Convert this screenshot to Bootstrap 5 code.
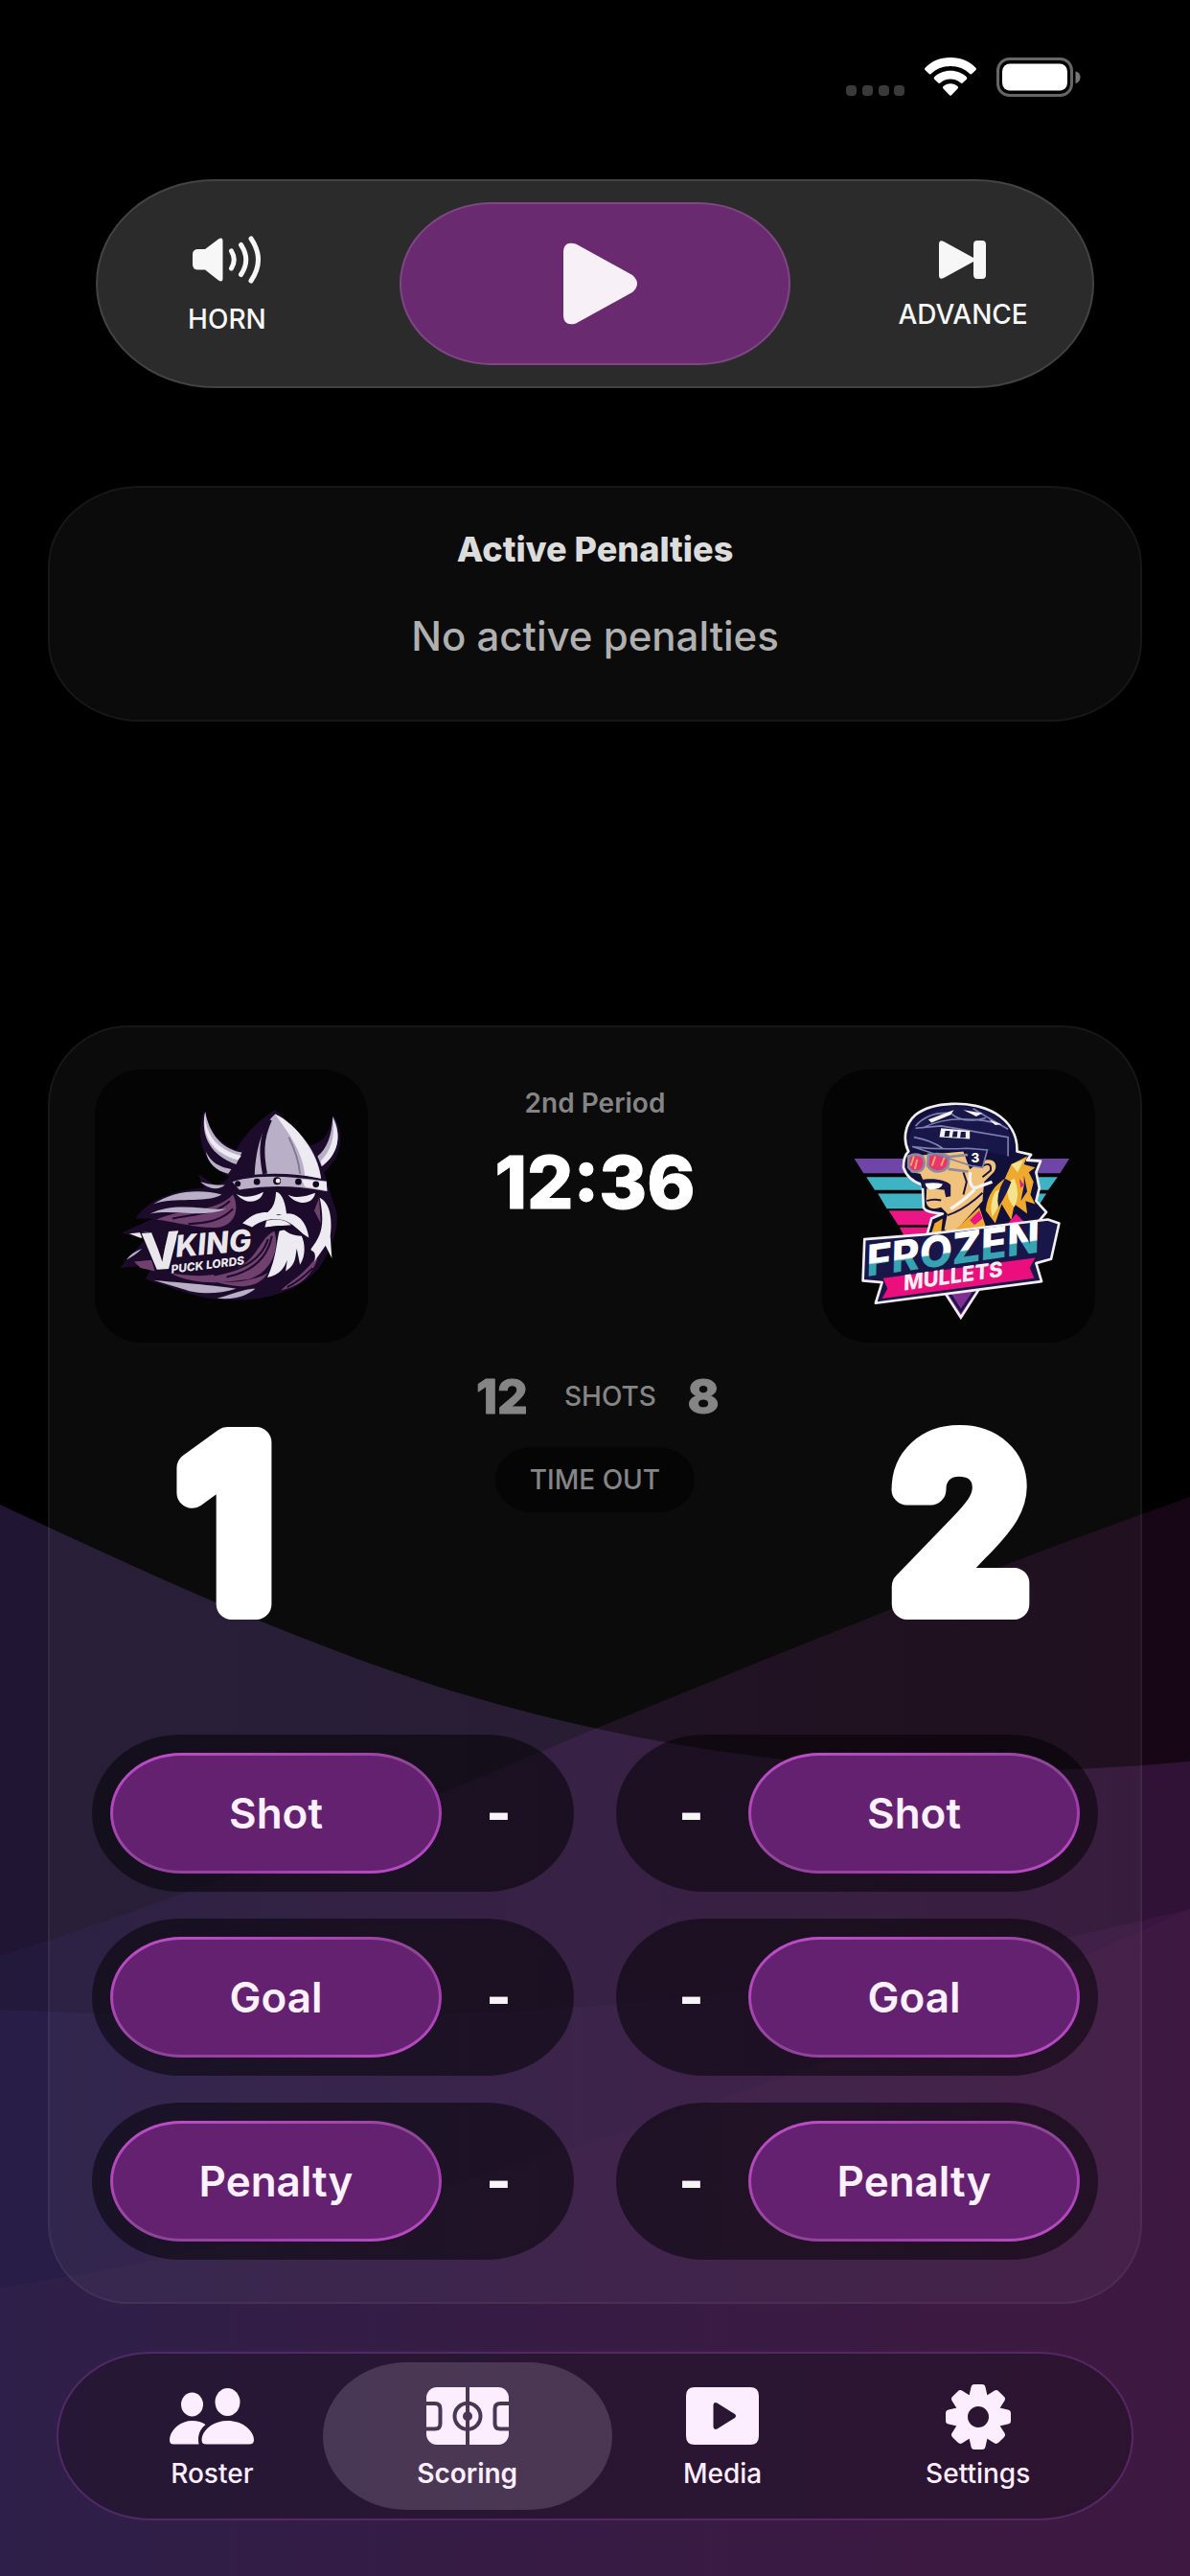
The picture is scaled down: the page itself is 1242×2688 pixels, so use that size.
<!DOCTYPE html>
<html lang="en">
<head>
<meta charset="utf-8">
<meta name="viewport" content="width=device-width, initial-scale=1">
<title>Scoring</title>
<link rel="stylesheet" href="https://cdn.jsdelivr.net/npm/bootstrap@5.3.0/dist/css/bootstrap.min.css">
<style>
  body { background: #000; color: #fff; font-family: Inter, "Liberation Sans", sans-serif; font-size: 28px; line-height: 34px; }
  button { font-family: inherit; }
  svg { display: block; }
  .backdrop { z-index: -1; top: 0; left: 0; }
  .status { padding: 60px 114px 0 0; height: 187px; gap: 20px; }
  .status-icons { height: 41px; gap: 21px; }

  .controls { margin: 0 100px; padding: 24px 0; background: #2b2b2b; border: 2px solid #434343; border-radius: 124px / 109px; height: 218px; }
  .side-btn { width: 26%; gap: 20px; padding-top: 4px; background: none; border: 0; color: #f7f7f7; font-size: 28px; font-weight: 500; }
  .play-btn { width: 408px; height: 170px; padding: 0 0 0 12px; border: 2px solid #7d4784; border-radius: 96px / 85px; background: #6a2a70; }

  .panel { margin: 0 50px; background: rgba(255,255,255,.043); border: 2px solid rgba(255,255,255,.05); }
  .penalties { margin-top: 102px; padding: 44px 0 66px; border-radius: 96px / 84px; height: 246px; }
  .penalties h1 { font-size: 36px; line-height: 40px; font-weight: 800; color: #dcdcdc; margin: 0; }
  .penalties p { font-size: 42px; line-height: 50px; font-weight: 500; color: #b0b0b0; margin: 46px 0 0; }

  .board { margin-top: 317px; padding: 44px; border-radius: 84px; }
  .teams { padding: 0 3px; }
  .team-col { width: 285px; }
  .logo-tile { background: #040404; border-radius: 48px; overflow: hidden; }
  .digits { font-family: Inter, "Liberation Sans", sans-serif; font-weight: 800; fill: #fff; stroke: #fff; stroke-linejoin: round; text-anchor: middle; }
  .score { margin-top: 25px; }
  .score .digits { font-size: 232px; font-weight: 500; stroke-width: 32px; }
  .clock .digits { font-size: 76px; stroke-width: 1px; }
  .shots .digits { font-size: 50px; stroke-width: 1px; fill: #858585; stroke: #858585; }
  .center-col { padding-top: 18px; color: #858585; font-weight: 500; }
  .period { font-weight: 600; }
  .clock { margin-top: 20px; }
  .shots { margin-top: 146px; height: 62px; gap: 30px; }
  .timeout { margin-top: 22px; height: 68px; width: 208px; border: 0; border-radius: 38px / 34px; background: #050505; color: #858585; font-size: 28px; font-weight: 500; }

  .actions { margin-top: 64px; gap: 28px 44px; display: grid; grid-template-columns: 1fr 1fr; }
  .pill { background: rgba(0,0,0,.5); border-radius: 92px / 82px; padding: 19px; height: 164px; }
  .act { width: 346px; flex: none; border: 3px solid transparent; border-radius: 74px / 63px; color: #fdf0ff; font-size: 44px; line-height: 52px; font-weight: 600;
    background: linear-gradient(#642170,#642170) padding-box, linear-gradient(160deg,#c24fce 0%,#a644b0 35%,#8d4794 50%,#a13bac 70%,#c24fce 100%) border-box; }
  .minus { border: 0; background: none; color: #f7f4f7; font-size: 56px; line-height: 56px; font-weight: 800; padding: 0; }

  .tabs { margin: 50px 59px 58px; padding: 9px 27px; height: 176px; background: rgba(28,16,34,.5); border: 2px solid rgba(150,70,180,.4); border-radius: 98px / 88px; }
  .tab { flex: 1 1 0; color: #fdeeff; text-decoration: none; font-weight: 500; padding-top: 23px; gap: 8px; }
  .tab svg { height: 68px; }
  .tab.current { margin: 0 -18px; background: rgba(245,225,255,.165); border-radius: 88px / 77px; flex: 0 0 302px; font-weight: 600; }
</style>
<script src="https://cdn.jsdelivr.net/npm/bootstrap@5.3.0/dist/js/bootstrap.bundle.min.js"></script>
</head>
<body>
<div class="position-relative min-vh-100">

<svg class="backdrop position-absolute w-100 h-100" viewBox="0 0 1242 2688" preserveAspectRatio="none" aria-hidden="true">
  <defs>
    <linearGradient id="wa"><stop offset="0" stop-color="#201532"/><stop offset=".5" stop-color="#20132b"/><stop offset="1" stop-color="#210f28"/></linearGradient>
    <linearGradient id="wb"><stop offset="0" stop-color="#2c2860" stop-opacity=".2"/><stop offset=".5" stop-color="#6e2d82" stop-opacity=".2"/><stop offset="1" stop-color="#6e1e6e" stop-opacity=".2"/></linearGradient>
    <linearGradient id="wc"><stop offset="0" stop-color="#3c3078" stop-opacity=".2"/><stop offset=".5" stop-color="#502864" stop-opacity=".14"/><stop offset="1" stop-color="#6e2878" stop-opacity=".14"/></linearGradient>
    <linearGradient id="wd"><stop offset="0" stop-color="#462850" stop-opacity=".2"/><stop offset=".5" stop-color="#502350" stop-opacity=".12"/><stop offset="1" stop-color="#643246" stop-opacity=".12"/></linearGradient>
  </defs>
  <path fill="url(#wa)" d="M0 1570C150 1640 300 1710 470 1764C650 1818 900 1870 1242 1838V2688H0Z"/>
  <path fill="url(#wb)" d="M0 2041C180 1985 420 1890 626 1802C850 1710 1050 1630 1242 1562V2688H0Z"/>
  <path fill="url(#wc)" d="M0 2097C500 2120 850 2090 1242 1992V2688H0Z"/>
  <path fill="url(#wd)" d="M0 2387C250 2350 450 2285 620 2235C850 2160 1050 2080 1242 1992V2688H0Z"/>
</svg>

<header class="status d-flex justify-content-end">
  <div class="status-icons d-flex align-items-end">
    <svg width="61" height="41" viewBox="0 0 61 41" fill="#3a3a3a" aria-label="No signal"><rect y="29" width="11" height="11" rx="4"/><rect x="17" y="29" width="11" height="11" rx="4"/><rect x="34" y="29" width="11" height="11" rx="4"/><rect x="50" y="29" width="11" height="11" rx="4"/></svg>
    <svg width="54" height="41" viewBox="0 0 54 41" fill="#fff" aria-label="Wi-Fi"><path d="M27 0C16 0 7 4 .8 10.600Q-.6 12 .7 13.300L4.600 17Q5.600 18 6.800 16.900C12 12 19 9 27 9S42 12 47.200 16.900Q48.400 18 49.400 17L53.300 13.300Q54.600 12 53.200 10.600C47 4 38 0 27 0Z"/><path d="M27 13.700C20.500 13.700 14.500 16.200 10.200 20.200Q9 21.500 10.200 22.700L14.300 26.500Q15.300 27.300 16.400 26.400C19.200 23.900 22.900 22.600 27 22.600S34.800 23.900 37.600 26.400Q38.700 27.300 39.700 26.500L43.800 22.700Q45 21.500 43.800 20.200C39.500 16.200 33.500 13.700 27 13.700Z"/><path d="M27 27.200C24 27.200 21.400 28.300 19.500 30Q18.300 31.200 19.500 32.400L26 39.200Q27 40.200 28 39.200L34.500 32.400Q35.700 31.200 34.500 30C32.600 28.300 30 27.200 27 27.200Z"/></svg>
    <svg width="88" height="41" viewBox="0 0 88 41" aria-label="Battery full"><rect x="1.500" y="1.500" width="77" height="38" rx="12" fill="none" stroke="#666" stroke-width="3"/><rect x="6" y="6.500" width="68" height="28" rx="8" fill="#fff"/><path d="M82.500 14.500C85.500 15 87.500 17.500 87.500 20.500S85.500 26.500 82.500 27Z" fill="#777"/></svg>
  </div>
</header>

<main>
  <section class="controls d-flex justify-content-between align-items-center" aria-label="Game clock controls">
    <button type="button" class="side-btn d-flex flex-column align-items-center">
      <svg width="72" height="50" viewBox="0 0 72 50" fill="#f7f7f7" aria-hidden="true"><path d="M6 14H13L27 3.500Q31.500.8 31.500 5.500V44.500Q31.500 49 27 46.500L13 35.500H6Q0 35.500 0 30V19.500Q0 14 6 14Z"/><g fill="none" stroke="#f7f7f7" stroke-width="5" stroke-linecap="round"><path d="M40.500 16Q46 25 40.500 34"/><path d="M50.500 9.500Q61 25 50.500 40.500"/><path d="M61 3Q76 25 61 47"/></g></svg>
      <span>HORN</span>
    </button>
    <button type="button" class="play-btn d-flex align-items-center justify-content-center" aria-label="Play">
      <svg width="78" height="86" viewBox="0 0 78 86" aria-hidden="true"><path fill="#f7f0f7" d="M0 9Q1-2 13 1.500L72 34Q82 43 72 52L13 84.500Q1 88 0 77Z"/></svg>
    </button>
    <button type="button" class="side-btn d-flex flex-column align-items-center">
      <svg width="50" height="40" viewBox="0 0 50 40" fill="#f7f7f7" aria-hidden="true"><path d="M0 4Q0-1.500 5 1L36 18V4Q36 0 40 0H45Q49 0 49 4V36Q49 40 45 40H40Q36 40 36 36V22L5 39Q0 41.500 0 36Z"/></svg>
      <span>ADVANCE</span>
    </button>
  </section>

  <section class="panel penalties text-center">
    <h1>Active Penalties</h1>
    <p>No active penalties</p>
  </section>

  <section class="panel board">
    <div class="teams d-flex justify-content-between">
      <div class="team-col">
        <div class="logo-tile">
          <svg width="285" height="285" viewBox="58 78 854 856" role="img" aria-label="Vking Puck Lords">
            <g fill="#1d0b2c"><path d="M400 205C370 300 395 370 480 415L440 445L380 405L400 450C300 455 220 490 185 545L240 545L140 590L215 610L135 700L240 690L215 735C330 770 380 800 480 800C600 805 700 770 760 700C800 640 830 560 810 510L775 400C830 350 845 280 803 220C790 290 770 310 715 320C690 270 650 220 620 205C560 245 520 290 500 330C450 310 410 270 400 205Z"/></g>
            <g fill="#70406f"><path d="M490 470C430 530 340 510 250 548C330 560 400 580 450 572C500 560 510 510 490 470Z"/><path d="M620 585C580 600 570 660 520 690C460 730 360 730 290 715C380 760 470 745 540 735C600 720 640 650 620 585Z"/><path d="M180 680L235 675L245 710L200 700Z"/><path d="M760 480L745 520L765 560Z"/><path d="M740 680C700 730 670 740 640 770C700 760 740 720 755 670Z"/><path d="M440 745C500 745 560 740 600 715C570 765 510 765 440 745Z"/></g>
            <g fill="none" stroke="#1d0b2c" stroke-width="6"><path d="M480 490C440 530 380 530 300 545M490 515C450 555 400 560 350 562M612 600C600 660 560 710 470 728M600 610C580 670 530 705 430 722M740 700Q700 740 660 760"/></g>
            <g fill="#b9b0c8"><path d="M403 210C415 275 450 325 518 338L500 375C425 350 385 290 403 210Z"/><path d="M405 335C420 370 450 385 485 390L475 405C435 395 410 370 405 335Z"/><path d="M803 225C800 285 785 325 755 350L768 382C815 350 835 285 803 225Z"/><path d="M622 218C585 250 562 320 558 408Q660 398 766 420C760 340 690 250 622 218Z"/><path d="M488 430Q580 398 783 428L785 460Q640 432 510 455Z"/><path d="M388 430C410 450 440 460 465 440C445 440 420 440 388 430Z"/><path d="M455 470C380 450 300 460 240 500C310 475 400 500 455 470Z"/><path d="M470 515C400 520 310 490 230 530C310 515 390 545 470 515Z"/><path d="M240 738C300 745 400 750 500 765C440 785 370 780 340 768Z"/><path d="M560 765C520 765 480 785 440 795C490 800 530 790 560 765Z"/><path d="M155 675Q175 650 205 640Q185 660 155 675Z"/></g>
            <g fill="#edeaf1"><path d="M403 210C400 280 440 330 516 348L506 362C425 340 390 285 403 210Z"/><path d="M803 235C812 290 795 335 765 365L768 380C820 345 832 285 803 235Z"/><path d="M622 218C650 260 710 330 715 410L766 420C755 340 690 250 622 218Z"/><path d="M705 422L783 430L785 458L715 445Z"/><path d="M500 468C530 485 560 475 585 462C580 495 530 505 500 468Z"/><path d="M662 470C690 485 720 475 748 465C740 505 690 505 662 470Z"/><path d="M625 462C645 465 655 500 658 532H590C615 515 622 500 625 462Z"/><path d="M520 560C560 520 600 520 632 535C670 520 715 530 728 605C700 590 690 570 660 555C620 535 570 555 550 572Z"/><path d="M595 552C620 545 650 545 672 565L590 572Z"/><path d="M640 570C625 610 630 660 598 730C640 720 650 700 660 675L655 710C690 690 685 660 690 640L700 690C720 660 715 620 705 600C680 600 655 590 640 570Z"/><path d="M762 480C800 500 800 560 795 600L800 670L780 630L745 680C755 640 730 650 735 640C765 600 780 570 762 480Z"/></g>
            <path d="M605 235C575 300 580 350 590 405" fill="none" stroke="#1d0b2c" stroke-width="15"/>
            <path d="M665 290Q695 350 700 405" fill="none" stroke="#817a95" stroke-width="6"/>
            <g fill="#130720"><circle cx="505" cy="436" r="9"/><circle cx="565" cy="430" r="10"/><circle cx="628" cy="427" r="12"/><circle cx="695" cy="430" r="10"/><circle cx="750" cy="438" r="10"/><path d="M590 575Q630 560 680 575L630 585Z"/></g>
            <circle cx="631" cy="427" r="7" fill="#eee"/>
            <g font-family="Inter, sans-serif" fill="#e9e7ec" font-weight="800" stroke="#180a24" paint-order="stroke"><path d="M165 592L225 586V602L200 606Z" stroke="none"/><text x="208" y="708" font-size="160" stroke-width="8" transform="rotate(-4 208 708)">V</text><text x="312" y="666" font-size="94" font-style="italic" transform="rotate(-5 312 666)" stroke-width="8">KING</text><text x="297" y="717" font-size="36" font-style="italic" transform="rotate(-7 297 717)" stroke-width="5">PUCK LORDS</text></g>
          </svg>
        </div>
        <div class="score"><svg class="mx-auto" width="240" height="320" viewBox="0 0 240 320"><text class="digits" x="116" y="248">1</text></svg></div>
      </div>

      <div class="center-col d-flex flex-column align-items-center">
        <div class="period">2nd Period</div>
        <div class="clock"><svg width="260" height="92" viewBox="0 0 260 92"><text class="digits" x="130" y="73">12:36</text></svg></div>
        <div class="shots d-flex align-items-center justify-content-center">
          <svg width="70" height="62" viewBox="0 0 70 62"><text class="digits" x="35" y="49">12</text></svg>
          <span>SHOTS</span>
          <svg width="38" height="62" viewBox="0 0 38 62"><text class="digits" x="19" y="49">8</text></svg>
        </div>
        <button type="button" class="timeout">TIME OUT</button>
      </div>

      <div class="team-col">
        <div class="logo-tile">
          <svg width="285" height="285" viewBox="58 78 854 856" role="img" aria-label="Frozen Mullets">
            <path fill="#6f46a8" d="M158 357H832L803 403H187Z"/><path fill="#3fb3c4" d="M196 415H795L766 456H222Z"/><path fill="#3fb3c4" d="M232 467H760L730 514H260Z"/><path fill="#ea1686" d="M266 520H725L698 565H295Z"/><path fill="#ea1686" d="M300 573H690L660 620H325Z"/>
            <path fill="#10103a" stroke="#f3eff0" stroke-width="8" stroke-linejoin="round" d="M328 335C310 300 315 250 350 220C400 180 520 170 600 215C650 245 670 290 668 335L712 345L700 362L742 365L728 400L738 450L728 490L760 525L735 555L640 600H385L400 545L435 530C410 528 380 525 375 510L372 440C340 430 320 410 312 385Q312 350 328 335Z"/>
            <path fill="#f1c27c" d="M335 350L500 335L520 390L560 365C600 350 610 380 595 400L565 430L560 490L470 590L440 580L450 530L430 510C400 520 385 510 383 490L385 450L365 405L335 400Z"/>
            <path fill="#1a1346" d="M365 425C400 415 450 425 460 440V475L445 478L440 455L370 450Z"/><path fill="#fff" d="M380 435Q410 430 435 437Q430 455 395 454Q382 450 380 435Z"/><path fill="none" stroke="#1a1346" stroke-width="6" d="M385 490Q405 482 430 488M500 400L510 430L500 470"/>
            <g stroke="#8b8aa3" stroke-width="8"><path fill="#e8356b" d="M328 350Q350 338 372 350Q385 375 370 392Q345 408 328 385Z"/><path fill="#e8356b" d="M390 345Q430 338 452 350Q460 385 435 395Q405 405 388 380Z"/><path fill="none" d="M452 352L515 345M452 390L515 398"/></g>
            <path fill="none" stroke="#ffa46a" stroke-width="6" d="M345 350L335 380M355 360L348 390M412 350L402 380M442 350L430 380"/>
            <path fill="none" stroke="#f5f2f4" stroke-width="10" d="M522 400Q515 440 535 450L590 430M535 455Q500 490 460 515"/>
            <path fill="none" stroke="#1a1346" stroke-width="6" d="M560 380Q590 365 585 395L560 415M450 535Q500 520 560 465"/>
            <path fill="#19164a" d="M328 325C325 250 380 200 480 193C580 195 640 240 650 300L640 350L575 335L560 385L525 380L510 335Z"/>
            <g fill="none" stroke="#7c7fb0" stroke-width="5"><path d="M350 255Q390 210 460 215M370 262Q460 215 600 245M345 290Q400 300 435 325M350 262L430 255L640 290V350M530 200Q570 225 640 265M460 215Q500 250 570 230M340 320Q420 330 510 325L575 330L560 385L525 380Z"/></g>
            <path fill="#f5f2f4" d="M430 262L520 270V296L425 290ZM390 235L470 205L460 220L400 245ZM500 205L560 215L540 225ZM580 235L620 250L600 252Z"/><path fill="#19164a" d="M443 270H458L455 288H440ZM468 272H482L480 290H465ZM492 273H507V292H490Z"/>
            <text x="524" y="369" font-family="Inter, sans-serif" font-size="40" font-weight="800" fill="#fff">3</text>
            <g fill="#efa92e"><path d="M650 375L700 350L690 375L725 385L705 400L720 430L710 470L725 500L695 490L700 530L660 500L650 550L620 500L600 560L570 520C575 470 600 440 630 420Z"/><path d="M475 580L550 510L570 570ZM410 560L435 545L430 590H400Z"/></g><path fill="#f3e38c" d="M600 460Q580 500 590 540Q620 500 625 450ZM640 430Q630 480 660 510Q680 470 660 420ZM650 375L690 360L670 400Z"/><path fill="#19164a" d="M630 420Q600 470 610 510Q640 460 650 430ZM690 410L700 460L680 490L690 440Z"/><path fill="#ea1686" d="M520 550L550 520L560 545L535 565ZM675 420L690 440L680 450ZM640 560L665 530L695 560Z"/>
            <path fill="#822d92" stroke="#f3eff0" stroke-width="8" d="M437 770L492 855L550 765Z"/><path fill="#822d92" stroke="#19164a" stroke-width="8" d="M447 765L492 835L540 765Z"/>
            <path fill="#19164a" stroke="#f3eff0" stroke-width="8" stroke-linejoin="round" d="M190 610L380 595L545 575L765 548L800 560L775 672L728 685L745 742L225 810L245 745L185 740Z"/>
            <path fill="#ea0f7c" d="M248 732L725 668L708 700L722 732L245 796L262 765Z"/>
            <defs><linearGradient id="ice" x1="0" y1="0" x2="0" y2="1"><stop offset=".55" stop-color="#fff"/><stop offset=".58" stop-color="#36a3b3"/></linearGradient></defs>
            <text x="202" y="726" transform="rotate(-8 202 726)" font-family="Inter, sans-serif" font-size="134" font-weight="800" font-style="italic" fill="url(#ice)">FROZEN</text>
            <text x="315" y="770" transform="rotate(-8 315 770)" font-family="Inter, sans-serif" font-size="66" font-weight="800" font-style="italic" fill="#f7eef4">MULLETS</text>
          </svg>
        </div>
        <div class="score"><svg class="mx-auto" width="240" height="320" viewBox="0 0 240 320"><text class="digits" x="122" y="248">2</text></svg></div>
      </div>
    </div>

    <div class="actions">
      <div class="pill d-flex"><button type="button" class="act">Shot</button><button type="button" class="minus flex-fill" aria-label="Remove shot, home">-</button></div>
      <div class="pill d-flex"><button type="button" class="minus flex-fill" aria-label="Remove shot, away">-</button><button type="button" class="act">Shot</button></div>
      <div class="pill d-flex"><button type="button" class="act">Goal</button><button type="button" class="minus flex-fill" aria-label="Remove goal, home">-</button></div>
      <div class="pill d-flex"><button type="button" class="minus flex-fill" aria-label="Remove goal, away">-</button><button type="button" class="act">Goal</button></div>
      <div class="pill d-flex"><button type="button" class="act">Penalty</button><button type="button" class="minus flex-fill" aria-label="Remove penalty, home">-</button></div>
      <div class="pill d-flex"><button type="button" class="minus flex-fill" aria-label="Remove penalty, away">-</button><button type="button" class="act">Penalty</button></div>
    </div>
  </section>
</main>

<nav class="tabs d-flex" aria-label="Main">
  <a class="tab d-flex flex-column align-items-center" href="#roster">
    <svg width="88" height="68" viewBox="0 0 88 68" fill="#fdeeff" aria-hidden="true"><ellipse cx="60.500" cy="18.500" rx="13" ry="14.500"/><ellipse cx="23.500" cy="21" rx="11.500" ry="12.500"/><path d="M60.500 38C77 38 88 49 88 58Q88 62.500 83 62.500H38Q33.500 62.500 33.500 58C33.500 49 44 38 60.500 38Z"/><path d="M23.500 38Q32 38 37.500 42Q28 50 30.500 62.500H4Q0 62.500 0 58C0 49 10 38 23.500 38Z"/></svg>
    <span>Roster</span></a>
  <a class="tab current d-flex flex-column align-items-center" href="#scoring" aria-current="page">
    <svg width="86" height="68" viewBox="0 0 86 68" aria-hidden="true"><mask id="rink"><rect y="3" width="86" height="60" rx="11" fill="#fff"/><g fill="none" stroke="#000" stroke-width="4"><path d="M43 0V68M-2 20H9Q14.500 20 14.500 25.500V41Q14.500 46.500 9 46.500H-2M88 20H77Q71.500 20 71.500 25.500V41Q71.500 46.500 77 46.500H88"/><circle cx="43" cy="33.300" r="13.500"/></g><circle cx="43" cy="33.300" r="5"/></mask><rect width="86" height="68" fill="#fdeeff" mask="url(#rink)"/></svg>
    <span>Scoring</span></a>
  <a class="tab d-flex flex-column align-items-center" href="#media">
    <svg width="76" height="68" viewBox="0 0 76 68" aria-hidden="true"><path fill="#fdeeff" fill-rule="evenodd" d="M9 3H67Q76 3 76 12V54Q76 63 67 63H9Q0 63 0 54V12Q0 3 9 3ZM28.500 21.500V44.500Q29 48 32.500 46.500L51 35Q53 33 51 31L32.500 19.500Q29 18 28.500 21.500Z"/></svg>
    <span>Media</span></a>
  <a class="tab d-flex flex-column align-items-center" href="#settings">
    <svg width="68" height="68" viewBox="-34 -34 68 68" aria-hidden="true"><defs><path id="tooth" d="M-10-20L-7.500-31Q-7-34-4-34H4Q7-34 7.500-31L10-20Z"/></defs><g fill="#fdeeff"><use href="#tooth"/><use href="#tooth" transform="rotate(45)"/><use href="#tooth" transform="rotate(90)"/><use href="#tooth" transform="rotate(135)"/><use href="#tooth" transform="rotate(180)"/><use href="#tooth" transform="rotate(225)"/><use href="#tooth" transform="rotate(270)"/><use href="#tooth" transform="rotate(315)"/></g><circle r="17.500" fill="none" stroke="#fdeeff" stroke-width="13"/></svg>
    <span>Settings</span></a>
</nav>
</div>
</body>
</html>
